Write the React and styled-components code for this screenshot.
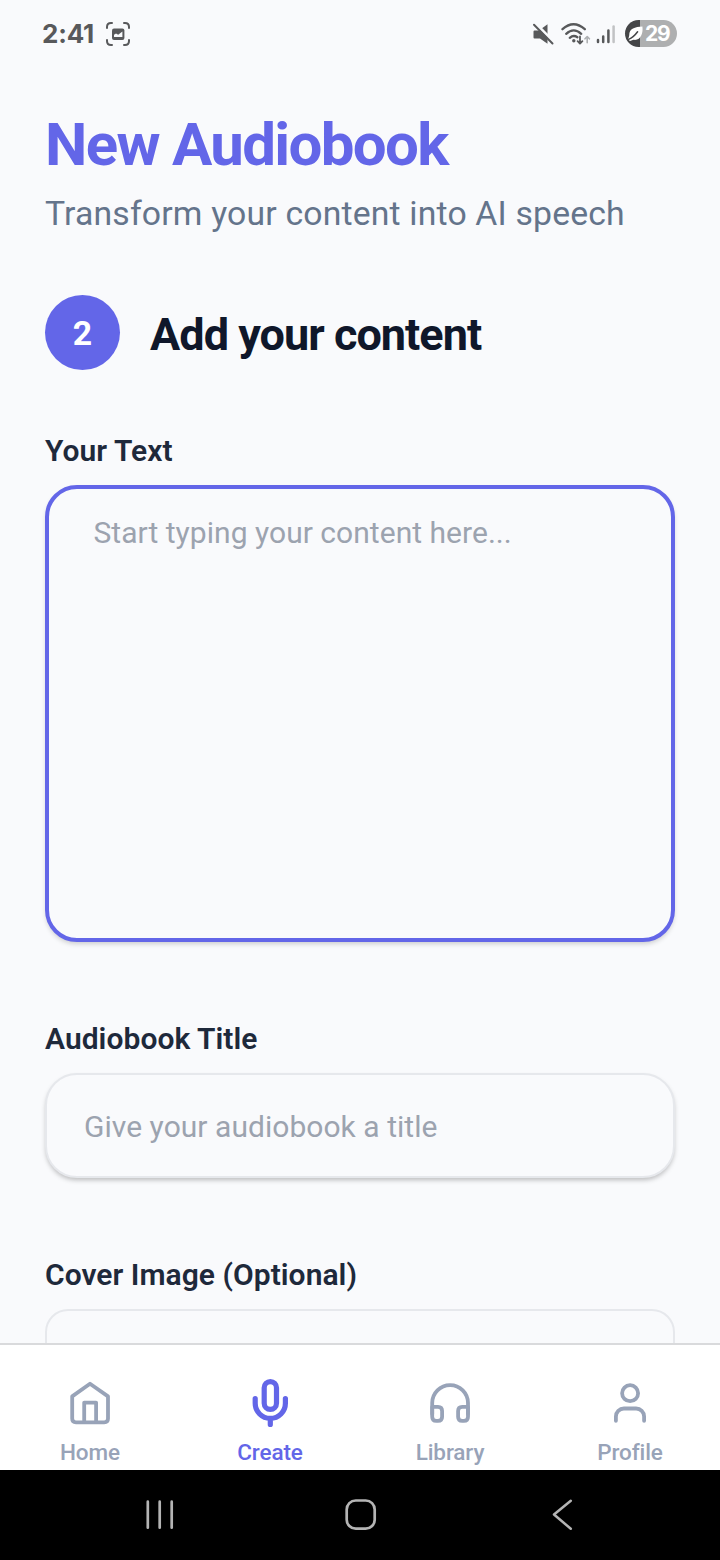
import React from "react";
import styled, { createGlobalStyle } from "styled-components";

const Global = createGlobalStyle`
  *, *::before, *::after { box-sizing: border-box; }
  body { margin: 0; background: #f9fafc; }
`;

const Screen = styled.div`
  display: flex;
  flex-direction: column;
  width: 720px;
  height: 1560px;
  overflow: hidden;
  background: #f9fafc;
  font-family: Roboto, "Liberation Sans", sans-serif;
`;

const StatusBar = styled.header`
  flex: none;
  display: flex;
  align-items: center;
  justify-content: space-between;
  height: 67px;
  padding: 0 43px 0 42px;
  color: #58595b;
`;

const StatusGroup = styled.div`
  display: flex;
  align-items: center;
  gap: ${(p) => p.$gap}px;
`;

const Clock = styled.span`
  font: 700 26px/30px Inter, sans-serif;
  letter-spacing: -0.2px;
  width: 54px;
  padding-top: 1px;
  white-space: nowrap;
`;

const Battery = styled.div`
  display: flex;
  align-items: center;
  width: 52px;
  height: 27px;
  margin-left: 9px;
  border-radius: 14px;
  background: linear-gradient(to right, #444547 15px, #aeafb0 15px);
  color: #fff;
  font: 700 21px/27px Inter, sans-serif;
  letter-spacing: -1.2px;
`;

const Icon = styled.svg`
  display: block;
  flex: none;
  fill: none;
  stroke: currentColor;
  stroke-linecap: round;
  stroke-linejoin: round;
`;

const Content = styled.main`
  flex: 1;
  min-height: 0;
  display: flex;
  flex-direction: column;
  overflow: hidden;
  padding: 43px 45px 0;
`;

const Title = styled.h1`
  margin: 0;
  color: #6366e8;
  font-size: 60px;
  font-weight: 700;
  line-height: 70px;
  letter-spacing: -1.68px;
`;

const Subtitle = styled.p`
  margin: 12px 0 0;
  color: #64748b;
  font-size: 33.75px;
  line-height: 44px;
  letter-spacing: 0.17px;
  white-space: nowrap;
`;

const StepHeader = styled.div`
  display: flex;
  align-items: center;
  gap: 30px;
  height: 75px;
  margin-top: 58.5px;
`;

const StepNumber = styled.div`
  display: grid;
  place-items: center;
  width: 75px;
  height: 75px;
  padding-top: 2px;
  border-radius: 50%;
  background: #6366e8;
  color: #fff;
  font-size: 33.75px;
  font-weight: 700;
`;

const StepTitle = styled.h2`
  margin: 5px 0 0;
  color: #0f172a;
  font-size: 45px;
  font-weight: 700;
  line-height: 54px;
  letter-spacing: -0.97px;
`;

const Field = styled.label`
  display: flex;
  flex-direction: column;
  gap: 15px;
  margin-top: ${(p) => p.$top}px;
`;

const FieldLabel = styled.span`
  color: #1e293b;
  font-size: 30px;
  font-weight: 600;
  line-height: 38px;
  letter-spacing: 0.04px;
`;

const TextArea = styled.textarea`
  display: block;
  width: 100%;
  height: 457px;
  margin: 0;
  padding: 25px 44px 25px 44.5px;
  border: 4px solid #6366e8;
  border-radius: 32px;
  outline: none;
  resize: none;
  background: #f9fafc;
  box-shadow: 0 3px 5px -1px rgba(0, 0, 0, 0.18);
  font: 400 30px/38px Roboto, sans-serif;
  letter-spacing: 0.03px;
  &::placeholder { color: #9ca3af; opacity: 1; }
`;

const TextInput = styled.input`
  display: block;
  width: 100%;
  height: 105px;
  margin: 0;
  padding: 2px 37px 0;
  border: 2px solid #e6e8ec;
  border-radius: 32px;
  outline: none;
  background: #f9fafc;
  box-shadow: 0 3px 5px -1px rgba(0, 0, 0, 0.26);
  font: 400 30px/38px Roboto, sans-serif;
  letter-spacing: 0.04px;
  &::placeholder { color: #9ca3af; opacity: 1; }
`;

const CoverPicker = styled.div`
  height: 200px;
  border: 2px solid #e6e8ec;
  border-radius: 23px;
`;

const TabBar = styled.nav`
  flex: none;
  display: grid;
  grid-template-columns: repeat(4, 1fr);
  height: 127.5px;
  border-top: 2px solid #d9dadc;
  background: #fff;
`;

const Tab = styled.div`
  display: flex;
  flex-direction: column;
  align-items: center;
  padding-top: 27.5px;
  color: ${(p) => (p.$active ? "#6366e8" : "#98a3b8")};
  font-size: 22.5px;
  font-weight: 500;
  line-height: 30px;
  letter-spacing: -0.1px;
  & > span { margin-top: 5px; }
`;

const SystemNav = styled.footer`
  flex: none;
  display: flex;
  align-items: center;
  justify-content: space-between;
  height: 90px;
  padding: 0 138px 0 140px;
  background: #000;
  color: #b4b4b4;
`;

const HomeIcon = () => (
  <Icon width="60" height="60" viewBox="0 0 60 60" strokeWidth="3.8">
    <path d="M30 11.7 12.2 24.4V46.6Q12.2 50.4 16 50.4H44.2Q48 50.4 48 46.6V24.4Z" />
    <path d="M24.2 50V30.6H36.1V50" />
  </Icon>
);

const MicIcon = () => (
  <Icon width="60" height="60" viewBox="0 0 60 60" strokeWidth="5.2">
    <rect x="24.2" y="9.6" width="12.3" height="27.8" rx="6.15" />
    <path d="M15.2 26.6V31.3A15.1 15.1 0 0 0 45.4 31.3V26.6M30.3 46.4V52.4" />
  </Icon>
);

const HeadphonesIcon = () => (
  <Icon width="60" height="60" viewBox="0 0 60 60" strokeWidth="3.8">
    <path d="M12.2 42V31.1A17.9 17.9 0 0 1 48 31.1V42" />
    <path d="M12.2 34.9H18Q22.1 34.9 22.1 39V44.7Q22.1 48.8 18 48.8H16.3Q12.2 48.8 12.2 44.7Z" />
    <path d="M48 34.9H42.2Q38.1 34.9 38.1 39V44.7Q38.1 48.8 42.2 48.8H43.9Q48 48.8 48 44.7Z" />
  </Icon>
);

const PersonIcon = () => (
  <Icon width="60" height="60" viewBox="0 0 60 60" strokeWidth="3.8">
    <circle cx="30.1" cy="21.2" r="8" />
    <path d="M15.9 48.8V44.5A8 8 0 0 1 23.9 36.5H36.1A8 8 0 0 1 44.1 44.5V48.8" />
  </Icon>
);

const CaptureIcon = () => (
  <Icon width="24" height="24" viewBox="0 0 24 24" strokeWidth="2">
    <path d="M1 6V5Q1 1 5 1H6M18 1H19Q23 1 23 5V6M23 18V19Q23 23 19 23H18M6 23H5Q1 23 1 19V18" />
    <rect x="6" y="6.5" width="12.4" height="11.5" rx="2" fill="currentColor" stroke="none" />
    <path d="M8 15V12.8L10 11.4 12.2 12.8 16.4 9.4V15Z" fill="#f9fafc" stroke="none" />
  </Icon>
);

const MutedIcon = () => (
  <Icon width="22" height="24" viewBox="0 0 22 24" strokeWidth="2">
    <path d="M2.5 8.5H7L15.5 2.3V21.8L8 16.5H2.5Q1.5 16.5 1.5 15.5V9.5Q1.5 8.5 2.5 8.5Z" fill="currentColor" stroke="none" />
    <path d="M3.5 1.2 22 20.3" stroke="#f9fafc" strokeWidth="3" strokeLinecap="butt" />
    <path d="M2 2.8 20.5 21.5" />
  </Icon>
);

const WifiIcon = () => (
  <Icon width="30" height="24" viewBox="0 0 30 24" strokeWidth="2.3">
    <path d="M1.5 7.2Q12.5-2.8 23.8 7.2M5.2 11.8Q12.7 5 20.2 11.8M8.8 15.8Q12.5 12.5 16.4 15.2" />
    <circle cx="12.8" cy="18.8" r="1.7" fill="currentColor" stroke="none" />
    <path d="M19 14.5V21.5M16.6 19.2 19 21.7 21.4 19.2" strokeWidth="1.8" />
    <path d="M26.2 20.8V14.8M24 16.8 26.2 14.5 28.4 16.8" stroke="#aeb0b2" strokeWidth="1.6" />
  </Icon>
);

const SignalIcon = () => (
  <Icon width="20" height="24" viewBox="0 0 20 24" strokeWidth="2.5">
    <path d="M2 18V20M7.2 14.5V20M12.4 8.5V20" />
    <path d="M17.6 4.5V20" stroke="#c1c2c4" />
  </Icon>
);

const LeafIcon = () => (
  <Icon width="20" height="27" viewBox="0 0 20 27">
    <path d="M4.2 15.5C4.2 8.5 10 7 17.4 6.6C18.4 13.5 15.5 21 8.5 19.8L5 21 3.2 19.6Z" fill="#fff" stroke="none" />
    <path d="M3.6 19.4Q8.5 17.4 12.6 11.8" stroke="#444547" strokeWidth="1.5" />
  </Icon>
);

const RecentsIcon = () => (
  <Icon width="40" height="40" viewBox="0 0 40 40" strokeWidth="2.7">
    <path d="M7.8 6.7V32.7M19.7 6.7V32.7M31.7 6.7V32.7" />
  </Icon>
);

const SystemHomeIcon = () => (
  <Icon width="40" height="40" viewBox="0 0 40 40" strokeWidth="2.7">
    <rect x="5.7" y="5.5" width="28" height="28.2" rx="9" />
  </Icon>
);

const BackIcon = () => (
  <Icon width="40" height="40" viewBox="0 0 40 40" strokeWidth="2.5">
    <path d="M28.8 5.7 12 19.5 28.8 33.8" />
  </Icon>
);

const tabs = [
  { label: "Home", Glyph: HomeIcon },
  { label: "Create", Glyph: MicIcon, active: true },
  { label: "Library", Glyph: HeadphonesIcon },
  { label: "Profile", Glyph: PersonIcon },
];

export default function App() {
  return (
    <Screen>
      <Global />
      <StatusBar>
        <StatusGroup $gap={10}>
          <Clock>2:41</Clock>
          <CaptureIcon />
        </StatusGroup>
        <StatusGroup $gap={5}>
          <StatusGroup $gap={7}>
            <MutedIcon />
            <WifiIcon />
          </StatusGroup>
          <StatusGroup $gap={0}>
            <SignalIcon />
            <Battery>
              <LeafIcon />
              29
            </Battery>
          </StatusGroup>
        </StatusGroup>
      </StatusBar>
      <Content>
        <Title>New Audiobook</Title>
        <Subtitle>Transform your content into AI speech</Subtitle>
        <StepHeader>
          <StepNumber>2</StepNumber>
          <StepTitle>Add your content</StepTitle>
        </StepHeader>
        <Field $top={62.5}>
          <FieldLabel>Your Text</FieldLabel>
          <TextArea placeholder="Start typing your content here..." />
        </Field>
        <Field $top={78}>
          <FieldLabel>Audiobook Title</FieldLabel>
          <TextInput placeholder="Give your audiobook a title" />
        </Field>
        <Field as="div" $top={78}>
          <FieldLabel>Cover Image (Optional)</FieldLabel>
          <CoverPicker />
        </Field>
      </Content>
      <TabBar>
        {tabs.map(({ label, Glyph, active }) => (
          <Tab key={label} $active={active}>
            <Glyph />
            <span>{label}</span>
          </Tab>
        ))}
      </TabBar>
      <SystemNav>
        <RecentsIcon />
        <SystemHomeIcon />
        <BackIcon />
      </SystemNav>
    </Screen>
  );
}
